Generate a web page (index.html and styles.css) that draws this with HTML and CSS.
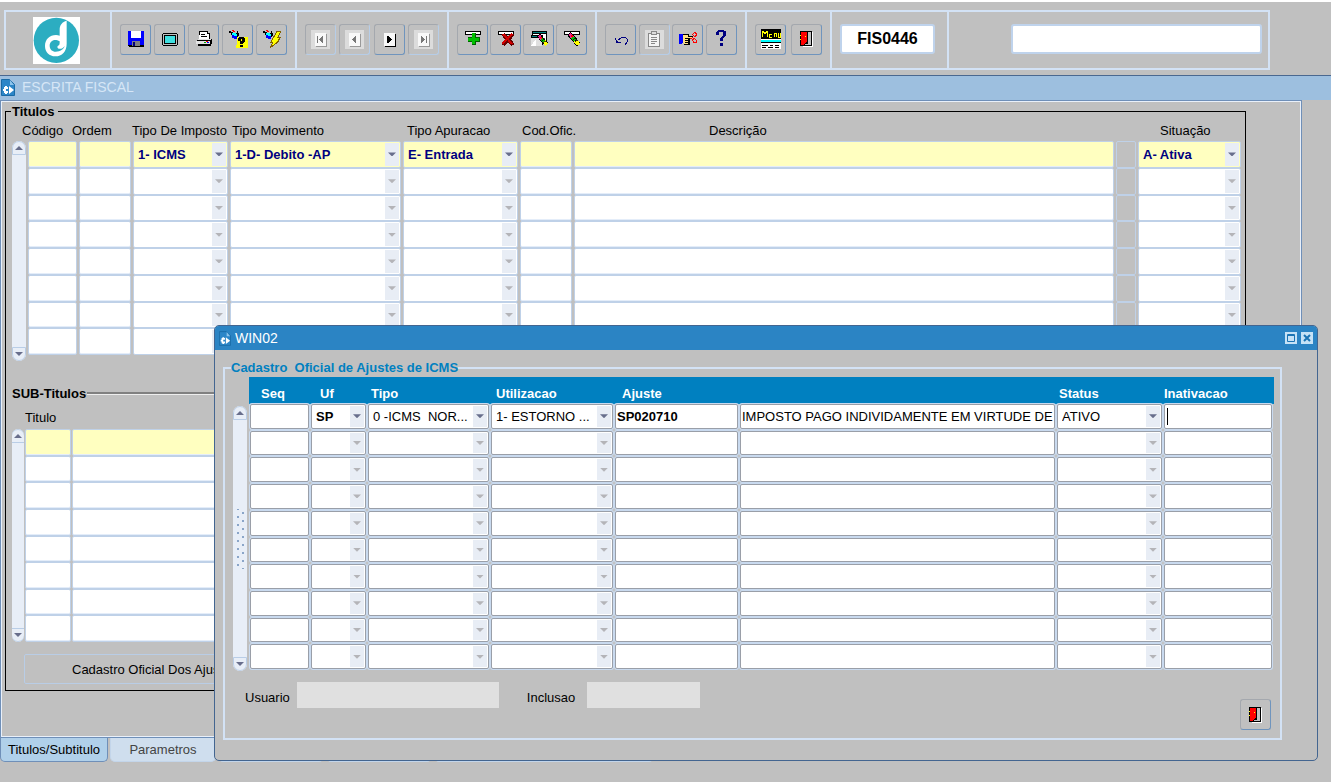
FILE: index.html
```html
<!DOCTYPE html>
<html lang="pt-BR">
<head>
<meta charset="UTF-8">
<title>FIS0446 - Escrita Fiscal</title>
<meta name="viewport" content="width=device-width,initial-scale=1">
<link rel="stylesheet" href="styles.css">
</head>
<body>

<!-- shared icons -->
<svg class="defs" aria-hidden="true">
  <symbol id="i-door" viewBox="0 0 20 20">
    <path fill="#fff" d="M5 3h11v15H6z"/>
    <path fill="#000" d="M3 2h12v15H3z"/>
    <path fill="#c0c0c0" d="M11 3h3v13H8v-1h3z"/>
    <path fill="#f00" d="M4 3h6v10l-2 1-2 2H4z"/>
    <path fill="#ff0" d="M8 7h1v1H8zM3 6h1v1H3zM3 10h1v1H3z"/>
  </symbol>
  <symbol id="i-doc" viewBox="0 0 14 17">
    <path fill="#2c86c8" stroke="#1a6aa5" d="M.5.5h8l5 5v11H.5z"/>
    <path fill="#8cc4ec" d="M9 1v5h4z"/>
    <path fill="#fff" d="M4 7h2v1h1v2H5v2h2v2H6v1H4v-1H3v-2H2v-2h1V8h1zM8 7l5 4-5 4z"/>
  </symbol>
  <symbol id="i-flash" viewBox="0 0 20 20">
    <path fill="#000" d="M1 2h2v1h2v2h2v2h1v3H6V8H4V6H3V4H1z"/>
    <path fill="#f00" d="M4 1h2v1h1v1H5V2H4z"/>
    <path fill="#0ff" d="M4 4h6v3H8v2H6V6H4z"/>
    <path fill="#000" d="M9 2h1v2h1v3h-1v1H9V5H8V4h1z"/>
    <path fill="#00f" d="M4 6h2v1h3v3H6V9H4z"/>
  </symbol>
  <symbol id="i-eraser" viewBox="0 0 20 20">
    <path stroke="#000" stroke-width="6" d="M5 3l12 14"/>
    <path stroke="#f0208c" stroke-width="4" d="M5.500 3.500l4 5"/>
    <path stroke="#f00" stroke-width="2" d="M8 5l2 3"/>
    <path stroke="#00c000" stroke-width="4" d="M9.500 8l3 4"/>
    <path stroke="#ff0" stroke-width="5" d="M13 12l4 5"/>
    <path stroke="#000" d="M10 11l4-3M12 14l4-3"/>
  </symbol>
</svg>

<header class="toolbar">
  <div class="cell logo">
    <svg width="47" height="47" viewBox="0 0 141 141" role="img" aria-label="d">
      <path fill="#fff" d="M0 0h141v141H0z"/>
      <circle cx="70" cy="70" r="68" fill="#2cadc1"/>
      <path fill="#fff" d="M80 38c0-14 8-24 21-27v69c0 24-14 38-34 38-18 0-31-13-31-31 0-20 14-33 33-33 4 0 8 1 11 2z"/>
      <path fill="#2cadc1" d="M80 73c-17-10-30 0-30 13 0 11 8 18 18 18 14 0 24-7 27-17-5 7-12 10-18 8-6-3-4-9 1-10 2-2 2-6 2-12z"/>
    </svg>
  </div>

  <div class="cell w5">
    <button aria-label="Salvar"><svg viewBox="0 0 20 20">
      <path fill="#000" d="M2 2h16v16H3l-1-1z"/><path fill="#00f" d="M2 2h16v14H2z"/>
      <path fill="#fff" d="M5 2h10v7H5z"/><path fill="#808080" d="M6 12h8v5H6z"/><path fill="#000080" d="M7 13h2v4H7z"/>
    </svg></button>
    <button aria-label="Tela"><svg viewBox="0 0 20 20">
      <path fill="#000" d="M3 4h14v1h1v11h-1v1H3v-1H2V5h1z"/><path fill="#c0c0c0" d="M3 5h14v11H3z"/>
      <path fill="#000" d="M4 6h12v9H4z"/><path fill="#40e0e0" d="M5 7h10v7H5z"/>
    </svg></button>
    <button aria-label="Imprimir"><svg viewBox="0 0 20 20">
      <path fill="#000" d="M5 2h9v2h2v6H6V9H5z"/><path fill="#fff" d="M6 3h7v2h2v5H5z"/>
      <path stroke="#000" d="M7 5.500h4M7 7.500h6"/>
      <path fill="#000" d="M4 10h14v5h-1v2H4v-2H2v-3z"/><path fill="#e4e4e4" d="M4 10h12l1 1H3zM2 12h14v3H2z"/>
      <path fill="#f00" d="M12 12h2v1h-2z"/><path fill="#0a0" d="M10 13h2v1h-2z"/><path fill="#00f" d="M13 13h2v1h-2z"/>
    </svg></button>
    <button aria-label="Entrar consulta"><svg viewBox="0 0 20 20">
      <path fill="#ff0" d="M9 8h11v11H8v-3h1z"/>
      <use href="#i-flash" width="20" height="20"/>
      <path fill="#000" d="M11 8h5v1h1v4h-1v1h-1v1h-3v-3h2v-2h-1v2h-3V9h1zM12 16h3v2h-3z"/>
    </svg></button>
    <button aria-label="Executar consulta"><svg viewBox="0 0 20 20">
      <use href="#i-flash" width="20" height="20"/>
      <path fill="#ff0" stroke="#806000" d="M15 2h4l-3 6h3l-3 4h1l-9 7 3-6H9z"/>
    </svg></button>
  </div>

  <div class="cell w4">
    <button disabled aria-label="Primeiro"><svg class="nav" viewBox="0 0 19 19">
      <path fill="#dcdcdc" d="M0 0h19v19H0z"/><path fill="#999" d="M5 4h11v13H5z"/><path fill="#f8f8f8" d="M4 3h11v13H4z"/>
      <path fill="#777" d="M6 6h1v7H6zM12 6v7L8 9.500z"/></svg></button>
    <button disabled aria-label="Anterior"><svg class="nav" viewBox="0 0 19 19">
      <path fill="#dcdcdc" d="M0 0h19v19H0z"/><path fill="#999" d="M5 4h11v13H5z"/><path fill="#f8f8f8" d="M4 3h11v13H4z"/>
      <path fill="#777" d="M11 6v7L7 9.500z"/></svg></button>
    <button aria-label="Proximo"><svg class="nav" viewBox="0 0 19 19">
      <path fill="#000" d="M5 4h11v13H5z"/><path fill="#f8f8f8" d="M4 3h11v13H4z"/>
      <path fill="#000" d="M7 6v7h2l3-3.500L9 6z"/></svg></button>
    <button disabled aria-label="Ultimo"><svg class="nav" viewBox="0 0 19 19">
      <path fill="#dcdcdc" d="M0 0h19v19H0z"/><path fill="#999" d="M5 4h11v13H5z"/><path fill="#f8f8f8" d="M4 3h11v13H4z"/>
      <path fill="#777" d="M12 6h1v7h-1zM7 6v7l4-3.500z"/></svg></button>
  </div>

  <div class="cell w4b">
    <button aria-label="Inserir"><svg viewBox="0 0 20 20">
      <path fill="#000" d="M2 2h16v4H2z"/><path fill="#fff" d="M3 3h14v2H3z"/>
      <path fill="#006000" d="M9 4h4v4h4v5h-4v3H9v-3H5V8h4z"/><path fill="#00c000" d="M9 4h3v5h4v3h-4v3H9v-3H5V9h4z"/>
    </svg></button>
    <button aria-label="Remover"><svg viewBox="0 0 20 20">
      <path fill="#000" d="M2 2h16v4H2z"/><path fill="#fff" d="M3 3h14v2H3z"/>
      <path stroke="#600" stroke-width="4" d="M7 5l10 11M17 5L7 16"/><path stroke="#d00000" stroke-width="2" d="M7 5l9 10M16 5L6 15"/>
    </svg></button>
    <button aria-label="Limpar tela"><svg viewBox="0 0 20 20">
      <path fill="#000" d="M3 2h15v11H3z"/><path fill="#008080" d="M4 3h13v1H4z"/><path fill="#fff" d="M4 5h13v7H4z"/>
      <path fill="#000" d="M2 6h12v10H2z"/><path fill="#008080" d="M3 7h10v1H3z"/><path fill="#e0e0e0" d="M2 9h11v8H2z"/>
      <path fill="#fff" d="M2 17l5-7v7z"/>
      <use href="#i-eraser" x="6" y="4" width="14" height="14"/>
    </svg></button>
    <button aria-label="Limpar registro"><svg viewBox="0 0 20 20">
      <path fill="#000" d="M2 2h16v4H2z"/><path fill="#fff" d="M3 3h14v2H3z"/>
      <use href="#i-eraser" x="3" y="2" width="16" height="16"/>
    </svg></button>
  </div>

  <div class="cell w4c">
    <button aria-label="Desfazer"><svg viewBox="0 0 20 20" fill="none" stroke="#000080">
      <path d="M7 11l3-2 4-1 2 2v3l-2 3"/><path fill="#000080" stroke="none" d="M4 8l1 6h5v-1H8l-2-1z"/>
    </svg></button>
    <button disabled aria-label="Colar"><svg class="nav" viewBox="0 0 19 19">
      <path fill="#dcdcdc" d="M0 0h19v19H0z"/>
      <path fill="#f4f4f4" stroke="#888" d="M3.500 3.500h11v13h-11z"/><path fill="#ddd" stroke="#888" d="M6.500 1.500h5v3h-5z"/>
      <path stroke="#888" d="M6 7.500h6M6 9.500h6M6 11.500h6M6 13.500h4"/>
    </svg></button>
    <button aria-label="Recortar"><svg viewBox="0 0 20 20">
      <path fill="#00f" d="M1 5h4v9l-2 1H1z"/><path fill="#000" d="M5 5h6v2h4v2h-3v7H6z"/><path fill="#ffe080" d="M5 6h5v2h4v1h-4v6H6l-1-2z"/>
      <path stroke="#000" d="M7 9.500h4M7 11.500h4M7 13.500h4"/>
      <path fill="none" stroke="#f00" d="M12.500 9.500l3-1M14.500 5.500l2-2 2 1v2l-2 1zM14.500 10.500l2-1 2 2v2h-3z"/>
    </svg></button>
    <button aria-label="Ajuda"><svg viewBox="0 0 20 20">
      <path fill="#000080" d="M7 1h6v1h2v5h-1v1h-1v1h-1v3H9V9h1V8h1V7h1V3H8v3H5V3h1V2h1zM9 14h3v3H9z"/>
    </svg></button>
  </div>

  <div class="cell w2">
    <button aria-label="Menu"><svg viewBox="0 0 20 20">
      <path fill="#000" d="M0 0h20v20H0z"/>
      <path fill="none" stroke="#ff0" d="M1.500 8V2M2 2l2 3 2-3M6.500 2v6M11 5.500H8.500V8H11M13.500 8V4h2v4M17.500 4v4H19V4"/>
      <path fill="#fff" d="M0 10h20v10H0z"/><path fill="#0ff" d="M0 11h20v2H0z"/>
      <path stroke="#000" d="M0 13.500h20M1 16.500h6M9 16.500h3M14 16.500h4M1 18.500h4M7 18.500h5M14 18.500h4"/>
    </svg></button>
    <button aria-label="Sair"><svg viewBox="0 0 20 20"><use href="#i-door" width="20" height="20"/></svg></button>
  </div>

  <div class="cell code"><input value="FIS0446" aria-label="Programa"></div>
  <div class="cell message"><input aria-label="Mensagem"></div>
</header>

<main>
  <div class="titlebar">
    <svg width="14" height="17"><use href="#i-doc"/></svg>
    <h1>ESCRITA FISCAL</h1>
  </div>

  <div class="panel">
    <fieldset class="group">
      <legend>Titulos</legend>

      <div class="block">
        <div class="scroll"><i class="up"></i><i class="down"></i></div>
        <table class="sheet titulos">
          <thead>
            <tr><th>Código</th><th>Ordem</th><th>Tipo De Imposto</th><th>Tipo Movimento</th><th>Tipo Apuracao</th><th>Cod.Ofic.</th><th>Descrição</th><th>Situação</th></tr>
          </thead>
          <tbody id="titulos"></tbody>
        </table>
      </div>

      <h2 class="divider">SUB-Titulos</h2>

      <div class="block sub">
        <div class="scroll"><i class="up"></i><i class="down"></i></div>
        <table class="sheet subtitulos">
          <thead><tr><th>Titulo</th></tr></thead>
          <tbody id="subtitulos"></tbody>
        </table>
      </div>

      <button class="wide">Cadastro Oficial Dos Ajustes</button>
    </fieldset>
  </div>

  <nav class="tabs">
    <button class="active">Titulos/Subtitulo</button>
    <button>Parametros</button>
    <span></span>
    <span></span>
    <span></span>
  </nav>
</main>

<section class="window" role="dialog" aria-labelledby="winTitle">
  <div class="caption">
    <svg width="12" height="15"><use href="#i-doc"/></svg>
    <h2 id="winTitle">WIN02</h2>
    <button aria-label="Maximizar"><svg viewBox="0 0 12 12"><path fill="none" stroke="#1b74b4" d="M2.500 2.500h7v7h-7zM2 3.500h8"/></svg></button>
    <button aria-label="Fechar"><svg viewBox="0 0 12 12"><path stroke="#1b74b4" stroke-width="2" d="M3 3l6 6M9 3L3 9"/></svg></button>
  </div>

  <fieldset class="ajustes">
    <legend>Cadastro&nbsp; Oficial de Ajustes de ICMS</legend>
    <div class="block">
      <div class="scroll"><i class="up"></i><i class="grip"></i><i class="down"></i></div>
      <table class="sheet icms">
        <thead>
          <tr><th>Seq</th><th>Uf</th><th>Tipo</th><th>Utilizacao</th><th>Ajuste</th><th>Status</th><th>Inativacao</th></tr>
        </thead>
        <tbody id="icms"></tbody>
      </table>
    </div>
    <div class="foot">
      <label for="usuario">Usuario</label><input id="usuario" class="usuario" readonly>
      <label for="inclusao">Inclusao</label><input id="inclusao" class="inclusao" readonly>
      <button class="exit" aria-label="Sair"><svg viewBox="0 0 20 20"><use href="#i-door" width="20" height="20"/></svg></button>
    </div>
  </fieldset>
</section>

<script src="script.js"></script>
</body>
</html>
```
FILE: styles.css
```css
*{box-sizing:border-box}
body{margin:0;min-height:100vh;background:#c0c0c0;color:#000;border-top:2px solid #fff;
     font:13px/15px "Liberation Sans",Arial,sans-serif}
button,input,select{font:inherit;color:inherit}
h1,h2{margin:0;font-weight:normal}
.defs{position:absolute;width:0;height:0}

/* toolbar */
.toolbar{display:flex;height:60px;margin:8px 61px 5px 4px;border:2px solid #d3e2f5}
.cell{display:flex;align-items:center;justify-content:space-between;flex:none;
      padding:0 8px 2px;border-right:2px solid #d3e2f5}
.logo{width:106px;padding:0 10px 0 6px;justify-content:center}
.w5{width:185px}
.w4{width:152px}
.w4b{width:148px}
.w4c{width:150px}
.w2{width:85px}
.toolbar button,.exit{width:31px;height:31px;padding:0;background:none;border:1px solid;
      border-color:#a4a8ae #6f94bd #6f94bd #a4a8ae;border-radius:3px;
      display:flex;align-items:center;justify-content:center}
.toolbar button:disabled{border-color:#a4a8ae #b6cde8 #b6cde8 #a4a8ae}
.toolbar button svg,.exit svg{width:20px;height:20px;shape-rendering:crispEdges}
.toolbar button svg.nav{width:19px;height:19px}
.code{width:117px;padding:0 12px 2px 8px}
.code input{width:100%;height:30px;padding:0;text-align:center;font-size:16px;font-weight:bold}
.message{flex:1;padding:0 6px 2px 62px;border:0}
.message input{width:100%;height:30px}
.toolbar input{background:#fff;border:2px solid #bfd3ec;border-radius:3px}

/* main form */
.titlebar{display:flex;align-items:center;gap:7px;height:25px;padding:0 0 1px 1px;
          background:#9dbfdf;border-top:1px solid #4a6890}
.titlebar h1{font-size:14px;color:#d6e6f6}
.panel{margin-right:29px;padding:2px 54px 45px 3px;border:2px solid #e9f0fa;
       outline:1px solid #6f8fb8;outline-offset:-1px}
.group{margin:0;padding:0 4px 6px 6px;border:1px solid #000;min-width:0}
.group legend{padding:0 4px 0 1px;margin-left:-1px;font-weight:bold}
.block{display:flex;gap:2px}
.scroll{flex:none;display:flex;flex-direction:column;justify-content:space-between;align-items:center;
        width:14px;background:#e8eef7;border-radius:7px;overflow:hidden}
.scroll .up,.scroll .down{width:14px;height:14px;border:1px solid #b9cde6;border-radius:7px 7px 0 0;
        display:flex;align-items:center;justify-content:center}
.scroll .down{border-radius:0 0 7px 7px}
.scroll .up::after,.scroll .down::after{content:"";width:8px;height:4px;background:#686e8c;
        clip-path:polygon(50% 0,100% 100%,0 100%)}
.scroll .down::after{clip-path:polygon(0 0,100% 0,50% 100%)}
.scroll .grip{width:8px;height:60px;
        background:radial-gradient(circle,#8aa5c8 1px,transparent 1px) 2px 0/10px 8px,
                   radial-gradient(circle,#8aa5c8 1px,transparent 1px) -3px 4px/10px 8px}

/* record sheets: header labels and fields keep separate column sets */
.sheet,.sheet thead{display:block}
.sheet{flex:1;min-width:0}
.sheet tr{display:grid}
.sheet th{padding:0;text-align:left;font-weight:normal;white-space:nowrap}
.sheet tbody{display:grid;grid-auto-rows:1fr}
.sheet td{position:relative;display:flex;padding:0;min-width:0}
.sheet input,.sheet select{width:100%;min-width:0;height:100%;margin:0;padding:0 1px;
        background:#fff;border:1px solid #bfd1e8;border-radius:2px;outline:0}
.sheet input{box-shadow:inset 0 -1px #e4edf9}
.sheet select{appearance:none;padding:0 20px 0 4px;opacity:1}
.pick::before{content:"";position:absolute;top:2px;right:2px;bottom:2px;width:14px;
        background:#e8edf5;pointer-events:none}
.pick::after{content:"";position:absolute;top:50%;right:5px;width:8px;height:4px;margin-top:-2px;
        background:#b4b4b8;clip-path:polygon(0 0,100% 0,50% 100%);pointer-events:none}
.current .pick::after{background:#686e8c}

.titulos thead{margin-left:-6px;padding:4px 0 3px}
.titulos thead tr{height:15px;grid-template-columns:50px 60px 100px 175px 115px 187px 1fr 81px}
.titulos tbody{height:214px}
.titulos tbody tr{grid-template-columns:49px 52px 95px 171px 115px 52px 1fr 20px 103px;column-gap:2px}
.block .scroll{margin:22px 0 -6px}
.group .current input,.group .current select{background-color:#ffffc0;color:#000080;font-weight:bold}
.sheet .flag input,.group .current .flag input{background:none;box-shadow:none}

.divider{display:flex;align-items:center;gap:1px;margin:31px 0 9px;font-size:13px;font-weight:bold}
.divider::after{content:"";flex:1;height:2px;background:#808080;border-bottom:1px solid #eee}
.sub{width:75%}
.group .sub{gap:1px}
.sub .scroll{width:12px}
.group .sub .scroll{margin:19px 0 0}
.subtitulos thead{padding-bottom:4px}
.subtitulos thead tr{height:15px}
.subtitulos tbody{height:213px}
.subtitulos tbody tr{grid-template-columns:46px 1fr;column-gap:1px}
.wide{display:block;width:400px;height:30px;margin:12px 0 0 12px;padding:0 0 0 47px;text-align:left;
      background:none;border:1px solid #b9cde6;border-radius:2px}

.tabs{display:flex;gap:2px;height:24px}
.tabs button,.tabs span{min-width:106px;padding:0;border:1px solid #c3d5ea;border-top:0;
      border-radius:0 0 5px 5px;background:#cfdeee;color:#444}
.tabs .active{width:108px;background:#b0d0ea;border-color:#6f8fb8;color:#000}
.tabs span:last-child{min-width:220px}

/* floating window */
.window{position:absolute;top:325px;left:214px;right:13px;padding-bottom:20px;background:#c0c0c0;
        border:1px solid #436590;border-radius:5px}
.caption{display:flex;align-items:center;gap:4px;height:24px;padding:0 4px;background:#2b84c4;
         border-radius:4px 4px 0 0}
.caption h2{flex:1;font-size:14px;color:#fff}
.caption button{width:12px;height:12px;padding:0;border:0;background:#c6e2f6;display:flex}
.caption svg{flex:none}
.caption button svg{width:12px;height:12px}
.ajustes{margin:10px 35px 0 8px;padding:0 6px 8px 8px;border:2px solid #d3e2f5;min-width:0}
.ajustes legend{margin-left:-2px;padding:0;font-weight:bold;color:#0080c0}
.ajustes .block{padding-top:2px}
.ajustes .block .scroll{margin:29px 0 0}
.icms thead{background:#0080c0;color:#fff;padding:9px 0 3px 12px}
.icms thead tr{height:15px;grid-template-columns:59px 51px 125px 126px 1fr 105px 110px}
.icms thead th{font-weight:bold}
.icms tbody{height:267px;padding:0 2px 0 1px}
.icms tbody tr{grid-template-columns:59px 55px 121px 122px 123px 1fr 105px 108px;column-gap:2px;padding-bottom:2px}
.icms input,.icms select{border-color:#9a9fa8;box-shadow:0 0 0 1px #c9daef}
.icms .strong>*{font-weight:bold}
.icms .typing input{background:#fff linear-gradient(#000,#000) 2px center/1px 17px no-repeat}
.foot{display:flex;align-items:flex-start;padding:11px 3px 0 12px}
.foot label{padding-top:8px}
.foot input{height:26px;border:0;background:#e0e0e0}
.usuario{width:202px;margin:0 28px 0 7px}
.inclusao{width:113px;margin-left:12px}
.exit{margin:17px 0 0 auto}
```
FILE: script.js
```js
/* column kinds: t = text, s = list, f = flag */
const SHEETS = {
  titulos: {
    rows: 8,
    cols: [["t","Código"],["t","Ordem"],["s","Tipo De Imposto"],["s","Tipo Movimento"],["s","Tipo Apuracao"],
           ["t","Cod.Ofic."],["t","Descrição"],["f","Marca"],["s","Situação"]],
    first: ["","","1- ICMS","1-D- Debito -AP","E- Entrada","","","","A- Ativa"]
  },
  subtitulos: {
    rows: 8,
    cols: [["t","Titulo"],["t","Descrição"]],
    first: ["",""]
  },
  icms: {
    rows: 10,
    cols: [["t","Seq"],["s strong","Uf"],["s","Tipo"],["s","Utilizacao"],["t strong","Ajuste"],
           ["t","Descrição"],["s","Status"],["t","Inativacao"]],
    first: ["","SP","0 -ICMS\u00a0 NOR...","1- ESTORNO ...","SP020710",
            "IMPOSTO PAGO INDIVIDAMENTE EM VIRTUDE DE","ATIVO",""]
  }
};

function buildCell(kind, label, value){
  const type=kind[0];
  const cls=kind.replace(/^t/,"").replace(/^s/,"pick").replace(/^f/,"flag").trim();
  const field = type==="s"
    ? `<select aria-label="${label}"><option>${value}</option></select>`
    : `<input aria-label="${label}" value="${value}">`;
  return `<td class="${cls}">${field}</td>`;
}

Object.entries(SHEETS).forEach(([id,s])=>{
  const body=document.getElementById(id);
  for(let r=0;r<s.rows;r++){
    const tr=document.createElement("tr");
    if(r===0) tr.className="current";
    tr.innerHTML=s.cols.map(([kind,label],c)=>buildCell(kind,label,r===0?s.first[c]:"")).join("");
    body.appendChild(tr);
  }
});

// cursor sits on the last field of the open window
document.querySelector("#icms .current td:last-child").classList.add("typing");
```
